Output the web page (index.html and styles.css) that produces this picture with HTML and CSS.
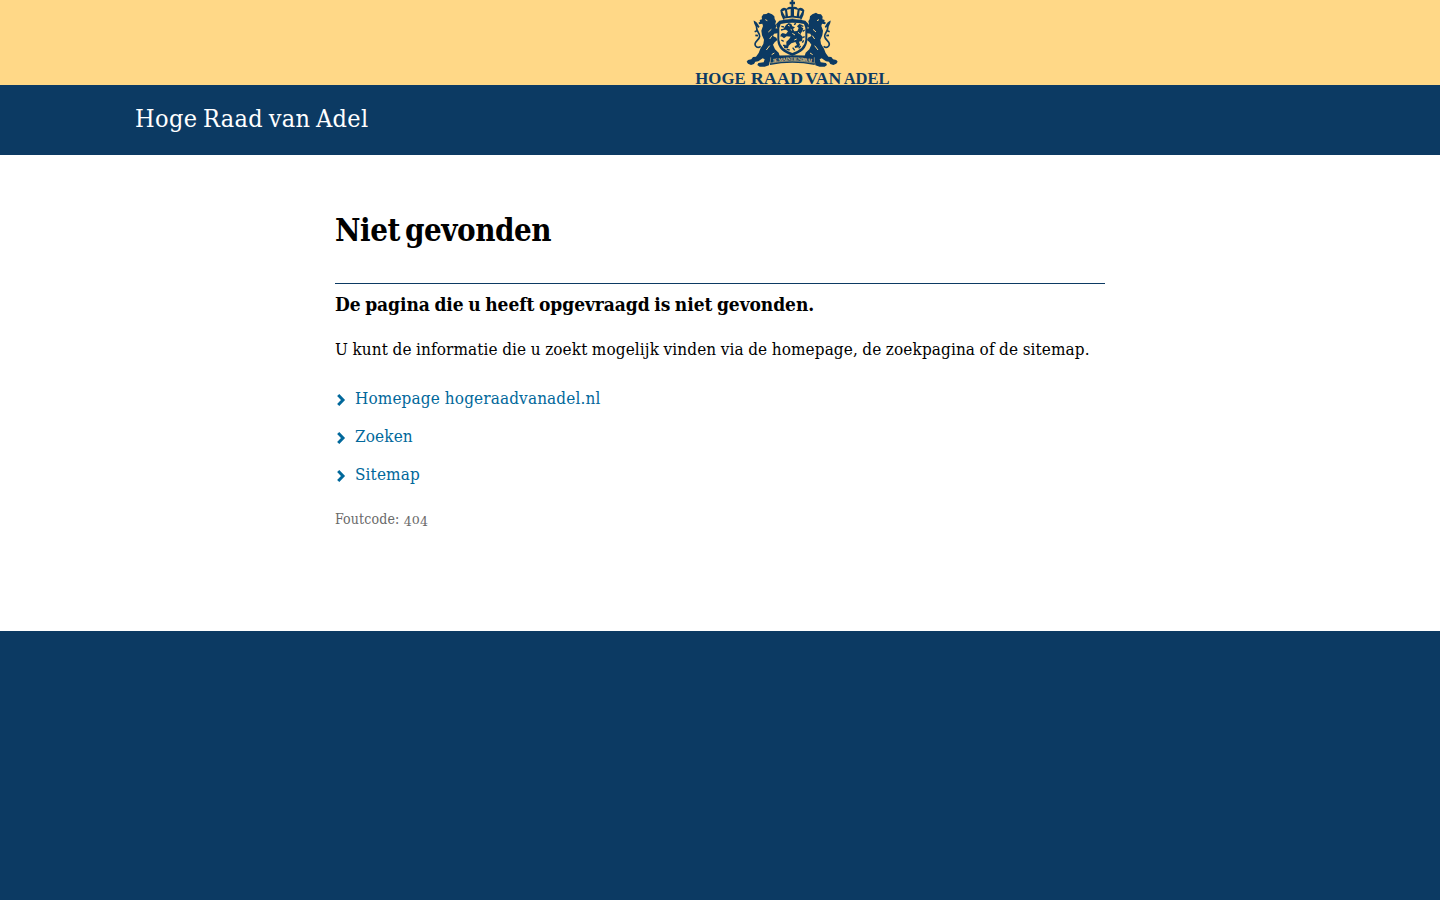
FILE: index.html
```html
<!DOCTYPE html>
<html lang="nl">
<head>
<meta charset="utf-8">
<title>Niet gevonden | Hoge Raad van Adel</title>
<link rel="stylesheet" href="styles.css">
</head>
<body>
<header>
  <div class="logo-bar">
    <svg class="logo" viewBox="15 0 585 255" role="img" aria-label="Hoge Raad van Adel">
      <defs>
        <g id="lion">
          <path d="M215 50L220 43 229 42 235 38 246 43 253 49 254 57 258 64 256 72 260 79 256 85 266 86 268 94 262 100 252 101 249 108 259 113 262 120 254 127 249 134 255 148 266 158 270 171 256 178 243 180 238 186 237 196 224 200 209 200 202 195 205 189 221 187 224 178 218 175 205 184 196 185 192 192 183 195 174 191 170 185 174 180 184 178 189 171 198 170 206 159 211 146 220 132 222 119 216 106 214 92 219 78 217 71 208 73 205 68 210 65 209 60 216 58z"/>
          <path d="M207 82C201 75 202 70 194 66 195 74 201 76 200 84 199 94 210 99 209 109 208 119 196 123 195 132 195 140 203 146 212 139M201 92l-7 3M204 107l-8-1" class="tail"/>
          <path d="M226 59l6 3M244 88l-9 8M246 107l-7 10M239 137l-10 13M253 159l-8 5" class="cut"/>
        </g>
      </defs>
      <use href="#lion"/>
      <use href="#lion" transform="matrix(-1 0 0 1 613 0)"/>
      <path d="M268 62q39-10 78 0l10 11-4 12v36q-2 34-45 46-43-12-45-46V85l-4-12z"/>
      <path d="M272 72q35-8 70 0l4 12v36q-2 26-39 39-37-13-39-39V84z" class="shield-detail"/>
      <path d="M288 75l8-6 8 3 3 7 8 3-6 5 4 7 9-1 4-9-5-5 7-7 7 2-1 7 6 4-3 8-6 10 7 8-2 12-9 2 3 9-4 8-11 2-1-5 7-4-5-9-12 4-8 7-2 8-11 0-2-6 8-3 0-11 8-7 5-8-12-1-8 6-6-5-3-7 5-4 10 3 6-8-6-5-10 1z"/>
      <path d="M274 79l8 2M273 90l8-2M275 102l-2 8M274 120l7 4M279 136l8 0M290 148l9 2M308 143l6 8M326 145l6-7M337 128l4-7M337 113l7-3M338 94l6-4M332 76l8 3M300 121l6-4M319 102l7 4M318 70l-6 4" class="billet"/>
      <path d="M294 76l5 2M302 88l4 3M307 100l8 5M320 117l-7 3M324 97l5 4" class="cut"/>
      <path d="M271 31q7-13 19-5 4-7 14-5v-8h-5V5h5V0h6v5h5v8h-5v8q10-2 14 5 12-8 19 5 0 12-9 28-27-6-54 0-9-16-9-28z"/>
      <path d="M277 34l9 17q1-10-1-20zM291 29l3 20 8-2V27zM323 29l-3 20-8-2V27zM337 34l-9 17q-1-10 1-20z" class="shield-detail"/>
      <path d="M283 57q24-6 48 0" class="cut"/>
      <path d="M236 168q71-5 142 0l-4 27q-67-13-134 0z"/>
      <path d="M242 172l-1 17q66-12 132 0v-17" class="ribbon-line"/>
      <path id="motto" d="M248 187q60-11 121 0" fill="none"/>
      <text class="motto"><textPath href="#motto" textLength="118">JE MAINTIENDRAI</textPath></text>
      <text class="logo-text" x="16" y="251" textLength="151" lengthAdjust="spacingAndGlyphs">HOGE</text>
      <text class="logo-text" x="182" y="251" textLength="157" lengthAdjust="spacingAndGlyphs">RAAD</text>
      <text class="logo-text" x="346" y="251" textLength="108" lengthAdjust="spacingAndGlyphs">VAN</text>
      <text class="logo-text" x="461" y="251" textLength="138" lengthAdjust="spacingAndGlyphs">ADEL</text>
    </svg>
  </div>
  <div class="title-bar"><a class="site-title">Hoge Raad van Adel</a></div>
</header>
<main>
  <h1>Niet gevonden</h1>
  <h2>De pagina die u heeft opgevraagd is niet gevonden.</h2>
  <p class="intro">U kunt de informatie die u zoekt mogelijk vinden via de homepage, de zoekpagina of de sitemap.</p>
  <ul class="links">
    <li><svg class="chevron" viewBox="0 0 8 12"><path d="M1.2 1L6 6l-4.8 5"/></svg><a>Homepage hogeraadvanadel.nl</a></li>
    <li><svg class="chevron" viewBox="0 0 8 12"><path d="M1.2 1L6 6l-4.8 5"/></svg><a>Zoeken</a></li>
    <li><svg class="chevron" viewBox="0 0 8 12"><path d="M1.2 1L6 6l-4.8 5"/></svg><a>Sitemap</a></li>
  </ul>
  <p class="code">Foutcode: <span class="low">4</span><span class="mid">0</span><span class="low">4</span></p>
</main>
<footer></footer>
</body>
</html>
```
FILE: styles.css
```css
* { box-sizing: border-box; margin: 0; padding: 0; }
body { height: 900px; display: flex; flex-direction: column; overflow: hidden; background: #fff; color: #000; font-family: "DejaVu Serif Condensed", "DejaVu Serif", serif; font-stretch: condensed; }
.logo-bar { height: 85px; background: #ffd887; padding-left: 695px; }
.logo { display: block; width: 195px; height: 85px; overflow: visible; fill: #0c3a63; }
.cut, .tail, .ribbon-line, .billet { fill: none; stroke: #ffd887; stroke-width: 3; }
.tail { stroke: #0c3a63; stroke-width: 5; }
.billet { stroke: #0c3a63; stroke-width: 4; }
.shield-detail { fill: #ffd887; }
.ribbon-line { stroke-width: 1.5; }
.motto { font: bold 14px "Liberation Serif", serif; fill: #ffd887; }
.logo-text { font: bold 49px "Liberation Serif", serif; }
.title-bar { height: 70px; background: #0c3a63; color: #fff; padding: 17px 0 0 135px; }
.site-title { font-size: 25px; line-height: 34px; letter-spacing: .38px; word-spacing: -2px; display: block; white-space: nowrap; }
main { width: 770px; height: 476px; margin: 0 auto; padding-top: 52px; white-space: nowrap; }
h1 { font-size: 31px; line-height: 46px; height: 76px; letter-spacing: -.47px; word-spacing: -4px; }
h2 { border-top: 1px solid #0c3a63; font-size: 19px; line-height: 30px; padding-top: 5px; letter-spacing: -.06px; word-spacing: -1.25px; }
.intro { font-size: 17px; line-height: 28px; margin-top: 16px; letter-spacing: .11px; word-spacing: -.5px; }
.links { list-style: none; margin-top: 16px; }
.links li { display: flex; align-items: center; height: 38px; font-size: 17px; color: #01689b; letter-spacing: .13px; }
.chevron { width: 8px; height: 12px; margin: 3px 10px 0 2px; overflow: visible; fill: none; stroke: #01689b; stroke-width: 3; }
.code { font-size: 14px; line-height: 22px; margin-top: 15px; color: #696969; letter-spacing: .15px; }
.low { display: inline-block; line-height: 1; transform: translateY(2px) scaleY(.95); }
.mid { display: inline-block; line-height: 1; transform: scaleY(.76); transform-origin: 50% 82%; }
footer { flex: 1; background: #0c3a63; }
```
